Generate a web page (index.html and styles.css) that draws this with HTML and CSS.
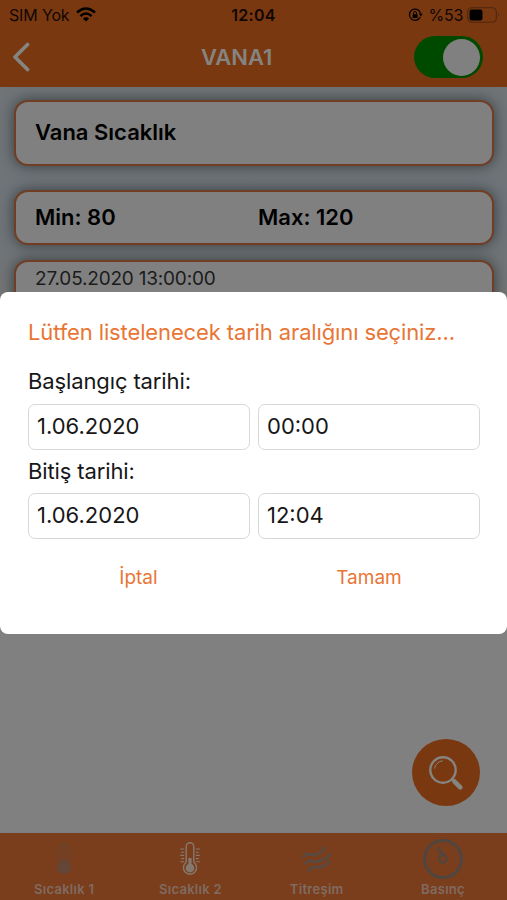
FILE: index.html
```html
<!DOCTYPE html>
<html lang="tr">
<head>
<meta charset="utf-8">
<title>VANA1</title>
<link rel="stylesheet" href="styles.css">
</head>
<body>
<div class="screen">
  <header class="header">
    <div class="status">
      <div class="carrier"><span class="sim">SIM Yok</span>
        <svg class="wifi" viewBox="0 0 20 15"><g fill="none" stroke="#000" stroke-width="2.5"><path d="M1 5.5Q10-2.5 19 5.5"/><path d="M4.4 9.1Q10 4 15.6 9.1"/></g><path d="M6.9 11.5Q10 8.9 13.1 11.5L10 14.6Z"/></svg>
      </div>
      <span class="clock">12:04</span>
      <div class="power">
        <svg class="lock" viewBox="0 0 15 14"><path d="M12.2 9A5.6 5.6 0 1 1 12.4 5" fill="none" stroke="#000" stroke-width="1.2"/><path d="M10.8 5.6h4l-2 2.9Z"/><rect x="4.6" y="6.3" width="5" height="3.7" rx=".6"/><path d="M5.6 6.5V5a1.5 1.5 0 0 1 3 0v1.5" fill="none" stroke="#000"/></svg>
        <span class="percent">%53</span>
        <svg class="battery" viewBox="0 0 33 16"><rect x=".7" y=".7" width="28.6" height="14.6" rx="4.3" fill="none" stroke="#4d260f" stroke-width="1.1"/><rect x="2.5" y="2.6" width="13" height="10.8" rx="2.2"/><path d="M31 5.5q1.8 2.5 0 5Z" fill="#4d260f"/></svg>
      </div>
    </div>
    <div class="navbar">
      <svg class="back" viewBox="0 0 18 30"><path d="M15.5 2.5 3 15l12.5 12.5" fill="none" stroke="#858481" stroke-width="3.8" stroke-linecap="round" stroke-linejoin="round"/></svg>
      <h1 class="title">VANA1</h1>
      <div class="switch"><div class="knob"></div></div>
    </div>
  </header>
  <main class="content">
    <section class="card name"><span>Vana Sıcaklık</span></section>
    <section class="card limits"><span class="min">Min: 80</span><span class="max">Max: 120</span></section>
    <section class="card record"><span>27.05.2020 13:00:00</span></section>
  </main>
  <div class="lower">
    <div class="search">
      <svg viewBox="0 0 36 36"><circle cx="15" cy="15" r="12.7" fill="none" stroke="#858481" stroke-width="2.4"/><path d="M6.6 13.5a9 9 0 0 1 8.2-7.7" fill="none" stroke="#858481" stroke-width="1"/><path d="m23.5 24 2.6 2.5" stroke="#858481" stroke-width="2"/><path d="m26.3 26.3 6 6.1" stroke="#858481" stroke-width="4.6" stroke-linecap="round"/></svg>
    </div>
  </div>
  <nav class="tabs">
    <div class="tab"><svg class="faint" viewBox="0 0 40 42"><g fill="none" stroke="#584b43" stroke-width="1.5"><path d="M17 24V9a3 3 0 0 1 6 0v15"/><path d="M12 12h3m-3 4h3m-3 4h3m10-8h3m-3 4h3m-3 4h3" stroke-width="1.1"/></g><circle cx="20" cy="29" r="7" fill="#584b43"/></svg><span>Sıcaklık 1</span></div>
    <div class="tab"><svg viewBox="0 0 40 42"><g fill="none" stroke="#85796f" stroke-width="1.4"><path d="M16.2 24.2V8.5a3.8 3.8 0 0 1 7.6 0v15.7a6.6 6.6 0 1 1-7.6 0Z"/><path d="M10.2 11h4m-3 3.2h3m-4 3.2h4m-3 3.2h3m-4 3.2h4M25.8 11h4m-4 3.2h3m-3 3.2h4m-4 3.2h3m-3 3.2h4" stroke-width="1.1"/></g><path d="M18.4 20h3.2v6.1a4.3 4.3 0 1 1-3.2 0Z" fill="#85796f"/></svg><span>Sıcaklık 2</span></div>
    <div class="tab"><svg viewBox="0 0 40 42"><path d="M6 19.5C10 12 14 19 19 16.5S26 14 28.500 8.500M8 26.500C12 19 16 26 22 23S30 21.500 33.500 15M11 33.500C15 26 18 31 23.500 29S30 27 32.500 22.500" fill="none" stroke="#584b43" stroke-width="2.6"/></svg><span>Titreşim</span></div>
    <div class="tab"><svg viewBox="0 0 40 42"><circle cx="20" cy="21" r="18.500" fill="none" stroke="#50463f" stroke-width="3"/><path d="M9.500 29a13.500 13.500 0 1 1 21 0" fill="none" stroke="#584b43" stroke-width="1" stroke-dasharray="2 3"/><path d="M14.500 10 22.200 17.700" stroke="#50463f" stroke-width="2.200"/><path d="m16.500 12 .3 8" stroke="#50463f" stroke-width="1.400"/><circle cx="20" cy="21" r="3.800" fill="none" stroke="#50463f" stroke-width="2"/></svg><span>Basınç</span></div>
  </nav>
  <div class="dialog" role="dialog">
    <h2 class="prompt"><span>Lütfen listelenecek tarih aralığını seçiniz...</span></h2>
    <label class="label start">Başlangıç tarihi:</label>
    <div class="fields"><div class="field">1.06.2020</div><div class="field">00:00</div></div>
    <label class="label end">Bitiş tarihi:</label>
    <div class="fields"><div class="field">1.06.2020</div><div class="field">12:04</div></div>
    <div class="actions"><span>İptal</span><span class="ok">Tamam</span></div>
  </div>
</div>
</body>
</html>
```
FILE: styles.css
```css
* { box-sizing: border-box; }
body { margin: 0; font-family: Inter, sans-serif; color: #000; background: #808080; }
h1, h2 { margin: 0; }
svg { display: block; flex: none; }
.screen { position: relative; width: 507px; height: 900px; overflow: hidden; display: flex; flex-direction: column; }
.header { height: 87px; flex: none; background: #7a3810; }
.status { height: 29px; display: grid; grid-template-columns: 1fr auto 1fr; align-items: center; padding: 0 9px 0 9px; font-size: 16px; line-height: 20px; color: #100703; }
.carrier, .power { display: flex; align-items: center; }
.carrier { gap: 7px; }
.sim { letter-spacing: -.15px; }
.wifi { width: 20px; height: 15px; }
.clock { font-weight: 600; letter-spacing: .3px; }
.power { justify-content: flex-end; }
.lock { width: 15px; height: 14px; margin-right: 6px; }
.percent { margin-right: 4px; letter-spacing: -.3px; }
.battery { width: 33px; height: 16px; margin-right: -2px; }
.navbar { height: 56px; display: grid; grid-template-columns: 189px 1fr auto; align-items: center; padding: 0 24px 0 12px; }
.back { width: 18px; height: 30px; }
.title { font-size: 22px; line-height: 28px; font-weight: 600; color: #858481; }
.switch { width: 69px; height: 42px; border-radius: 21px; background: #004a00; display: flex; justify-content: flex-end; align-items: center; padding-right: 3px; }
.knob { width: 37px; height: 37px; border-radius: 50%; background: #808080; }
.content { height: 213px; flex: none; overflow: hidden; padding: 13px 13px 0 14px; background: linear-gradient(#707477, #6e7479 65%, #747474); }
.card { border: 2px solid #713d24; border-radius: 14px; background: #808080; box-shadow: 0 0 13px 1px #3c4346; display: flex; align-items: center; padding-left: 19px; font-size: 22px; line-height: 28px; font-weight: 600; }
.name { height: 66px; padding-bottom: 3px; }
.limits { height: 55px; margin-top: 24px; padding-bottom: 2px; }
.min { width: 223px; }
.record { height: 70px; margin-top: 15px; align-items: flex-start; padding-top: 3px; font-size: 19px; font-weight: 400; letter-spacing: -.2px; color: #1b1b1b; }
.lower { flex: 1; display: flex; justify-content: flex-end; align-items: flex-end; padding: 0 27px 27px 0; }
.search { width: 68px; height: 67px; border-radius: 50%; background: #7a3810; display: flex; padding: 16px 0 0 16px; }
.search svg { width: 36px; height: 36px; }
.tabs { height: 67px; flex: none; background: #7a3e1d; display: grid; grid-template-columns: repeat(4, 126.3px); padding: 5px 0 0 1px; }
.tab { display: flex; flex-direction: column; align-items: center; font-size: 13px; line-height: 18px; font-weight: 600; color: #806b60; letter-spacing: .3px; }
.tab svg { width: 40px; height: 42px; }
.faint { opacity: .65; }
.dialog { position: absolute; left: 0; top: 292px; width: 507px; height: 342px; background: #fff; border-radius: 8px; padding: 24px 27px 0 28px; }
.prompt { font-size: 22px; line-height: 32px; font-weight: 400; letter-spacing: -.13px; color: #e97535; white-space: nowrap; }
.label { display: block; font-size: 22px; line-height: 28px; letter-spacing: -.12px; color: #171717; }
.start { margin: 19px 0 9px; }
.end { margin: 7px 0 8px; }
.fields { display: grid; grid-template-columns: 1fr 1fr; gap: 8px; height: 46px; }
.field { border: 1.5px solid #d8d8d8; border-radius: 7px; padding: 7px 8px; font-size: 22px; line-height: 28px; color: #171717; }
.actions { display: grid; grid-template-columns: 221px 1fr; margin-top: 25px; text-align: center; font-size: 19px; line-height: 28px; color: #e97535; }
.ok { padding-left: 9px; }
```
